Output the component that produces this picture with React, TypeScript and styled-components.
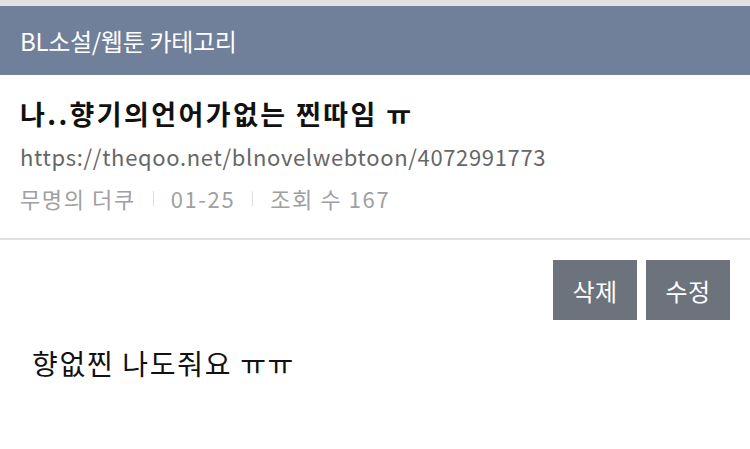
import React from "react";
import styled, { createGlobalStyle } from "styled-components";

const Global = createGlobalStyle`
  body {
    margin: 0;
    background: #fff;
    font-family: "Noto Sans CJK KR", "Noto Sans", sans-serif;
  }
`;

const Page = styled.div`
  width: 750px;
  height: 449px;
  overflow: hidden;
  background: #fff;
  border-top: 6px solid #e2e2e2;
  box-sizing: border-box;
`;

const Header = styled.div`
  height: 69px;
  background: #70809a;
  color: #fff;
  display: flex;
  align-items: center;
  padding: 0 20px;
  font-size: 24px;
  letter-spacing: -0.3px;
`;

const Info = styled.div`
  padding: 18px 20px 19px;
  border-bottom: 2px solid #e0e0e0;
  display: flex;
  flex-direction: column;
`;

const Title = styled.h1`
  margin: 0;
  font-size: 27px;
  font-weight: 700;
  color: #111;
  line-height: 42px;
  letter-spacing: 2.4px;
`;

const Url = styled.div`
  font-size: 22px;
  color: #666;
  line-height: 42px;
  letter-spacing: 0.65px;
`;

const Meta = styled.div`
  display: flex;
  align-items: center;
  gap: 17px;
  font-size: 22px;
  color: #a0a0a0;
  line-height: 42px;
  letter-spacing: 1.6px;
`;

const Sep = styled.span`
  width: 1px;
  height: 15px;
  background: #ddd;
`;

const Actions = styled.div`
  display: flex;
  justify-content: flex-end;
  gap: 9px;
  padding: 20px 20px 0;
`;

const Button = styled.button`
  width: 84px;
  height: 60px;
  border: none;
  background: #6c737c;
  color: #fff;
  font-family: inherit;
  font-size: 24px;
  letter-spacing: 0.5px;
  padding: 0;
`;

const Body = styled.p`
  margin: 0;
  padding: 23px 32px;
  font-size: 28px;
  line-height: 40px;
  color: #111;
  letter-spacing: 1.7px;
`;

export default function App() {
  return (
    <>
      <Global />
      <Page>
        <Header>BL소설/웹툰 카테고리</Header>
        <Info>
          <Title>나..향기의언어가없는 찐따임 ㅠ</Title>
          <Url>https://theqoo.net/blnovelwebtoon/4072991773</Url>
          <Meta>
            <span>무명의 더쿠</span>
            <Sep />
            <span>01-25</span>
            <Sep />
            <span>조회 수 167</span>
          </Meta>
        </Info>
        <Actions>
          <Button>삭제</Button>
          <Button>수정</Button>
        </Actions>
        <Body>향없찐 나도줘요 ㅠㅠ</Body>
      </Page>
    </>
  );
}
